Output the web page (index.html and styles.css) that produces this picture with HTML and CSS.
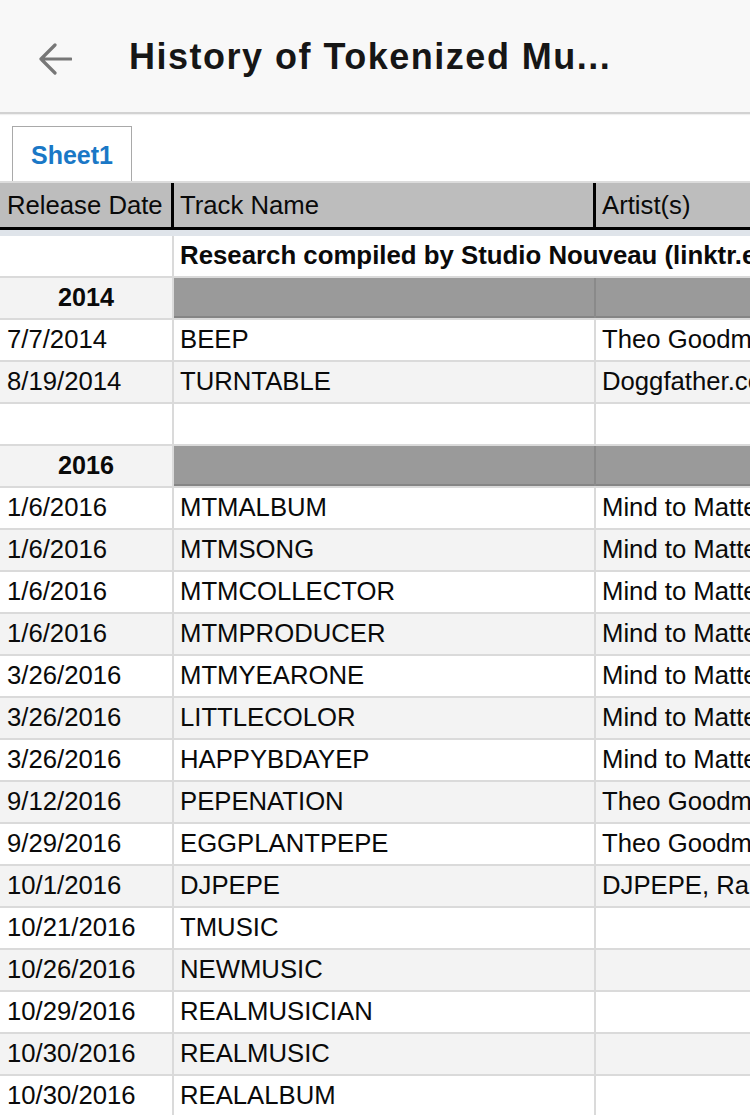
FILE: index.html
```html
<!DOCTYPE html>
<html>
<head>
<meta charset="utf-8">
<link rel="stylesheet" href="styles.css">
</head>
<body>
<div class="appbar">
  <svg class="back" width="40" height="40" viewBox="0 0 40 40"><path d="M39 24H9 M23 10L9 24L23 38" fill="none" stroke="#777" stroke-width="3.2" stroke-linecap="round" stroke-linejoin="round"/></svg>
  <div class="title">History of Tokenized Mu...</div>
</div>
<div class="tabs">
  <div class="tab">Sheet1</div>
</div>
<div class="sheet">
  <div class="hrow">
    <div class="hcell">Release Date</div>
    <div class="hcell">Track Name</div>
    <div class="hcell last">Artist(s)</div>
  </div>
  <div class="band"></div>
  <div class="row">
    <div class="cell"></div>
    <div class="cell bold overflow note">Research compiled by Studio Nouveau (linktr.ee/studionouveau)</div>
    <div class="cell last"></div>
  </div>
  <div class="row alt year">
    <div class="cell center bold">2014</div>
    <div class="cell dark"></div>
    <div class="cell dark last"></div>
  </div>
  <div class="row"><div class="cell">7/7/2014</div><div class="cell">BEEP</div><div class="cell last">Theo Goodman</div></div>
  <div class="row alt"><div class="cell">8/19/2014</div><div class="cell">TURNTABLE</div><div class="cell last">Doggfather.com</div></div>
  <div class="row"><div class="cell"></div><div class="cell"></div><div class="cell last"></div></div>
  <div class="row alt year">
    <div class="cell center bold">2016</div>
    <div class="cell dark"></div>
    <div class="cell dark last"></div>
  </div>
  <div class="row"><div class="cell">1/6/2016</div><div class="cell">MTMALBUM</div><div class="cell last">Mind to Matter</div></div>
  <div class="row alt"><div class="cell">1/6/2016</div><div class="cell">MTMSONG</div><div class="cell last">Mind to Matter</div></div>
  <div class="row"><div class="cell">1/6/2016</div><div class="cell">MTMCOLLECTOR</div><div class="cell last">Mind to Matter</div></div>
  <div class="row alt"><div class="cell">1/6/2016</div><div class="cell">MTMPRODUCER</div><div class="cell last">Mind to Matter</div></div>
  <div class="row"><div class="cell">3/26/2016</div><div class="cell">MTMYEARONE</div><div class="cell last">Mind to Matter</div></div>
  <div class="row alt"><div class="cell">3/26/2016</div><div class="cell">LITTLECOLOR</div><div class="cell last">Mind to Matter</div></div>
  <div class="row"><div class="cell">3/26/2016</div><div class="cell">HAPPYBDAYEP</div><div class="cell last">Mind to Matter</div></div>
  <div class="row alt"><div class="cell">9/12/2016</div><div class="cell">PEPENATION</div><div class="cell last">Theo Goodman</div></div>
  <div class="row"><div class="cell">9/29/2016</div><div class="cell">EGGPLANTPEPE</div><div class="cell last">Theo Goodman</div></div>
  <div class="row alt"><div class="cell">10/1/2016</div><div class="cell">DJPEPE</div><div class="cell last">DJPEPE, Rare Pepe</div></div>
  <div class="row"><div class="cell">10/21/2016</div><div class="cell">TMUSIC</div><div class="cell last"></div></div>
  <div class="row alt"><div class="cell">10/26/2016</div><div class="cell">NEWMUSIC</div><div class="cell last"></div></div>
  <div class="row"><div class="cell">10/29/2016</div><div class="cell">REALMUSICIAN</div><div class="cell last"></div></div>
  <div class="row alt"><div class="cell">10/30/2016</div><div class="cell">REALMUSIC</div><div class="cell last"></div></div>
  <div class="row"><div class="cell">10/30/2016</div><div class="cell">REALALBUM</div><div class="cell last"></div></div>
</div>
</body>
</html>
```

FILE: styles.css
```css
html, body {
  margin: 0;
  padding: 0;
  background: #ffffff;
}
body {
  width: 750px;
  height: 1115px;
  overflow: hidden;
  font-family: "Liberation Sans", Arial, sans-serif;
  color: #0a0a0a;
}
.appbar {
  height: 112px;
  background: #f8f8f8;
  border-bottom: 2px solid #d2d2d2;
  box-shadow: 0 1px 1px rgba(0,0,0,0.06);
  display: flex;
  align-items: center;
  position: relative;
}
.back {
  margin-left: 32px;
  margin-top: -2px;
  flex: none;
}
.title {
  margin-left: 57px;
  margin-top: 2px;
  font-family: "Liberation Sans", Arial, sans-serif;
  font-weight: 700;
  font-size: 36px;
  letter-spacing: 1.5px;
  color: #161616;
  white-space: nowrap;
}
.tabs {
  height: 55px;
  padding-top: 12px;
  border-bottom: 2px solid #dcdcdc;
  display: flex;
}
.tab {
  margin-left: 12px;
  width: 120px;
  height: 55px;
  box-sizing: border-box;
  border: 1.5px solid #a9a9a9;
  border-bottom: none;
  background: #fff;
  color: #1a78c6;
  font-weight: 700;
  font-size: 25px;
  display: flex;
  align-items: center;
  justify-content: center;
  padding-top: 3px;
}
.sheet {
  width: 750px;
  overflow: hidden;
}
.hrow, .row {
  display: grid;
  grid-template-columns: 174px 422px 320px;
  width: 916px;
}
.hrow {
  height: 47px;
  background: #bdbdbd;
  border-bottom: 3px solid #000;
  box-sizing: border-box;
}
.hcell {
  border-right: 3px solid #000;
  font-size: 25.7px;
  line-height: 44px;
  padding-left: 6px;
  white-space: nowrap;
  overflow: hidden;
}
.hcell:first-child {
  padding-left: 7px;
}
.hcell.last {
  border-right: none;
}
.band {
  height: 6px;
  background: #dfe4ea;
}
.row {
  height: 42px;
  box-sizing: border-box;
  border-bottom: 2px solid #dadada;
  background: #fff;
}
.row.alt {
  background: #f3f3f3;
}
.cell {
  border-right: 2px solid #dadada;
  font-size: 25.7px;
  line-height: 39px;
  padding-left: 6px;
  white-space: nowrap;
  overflow: hidden;
}
.cell:first-child {
  padding-left: 7px;
}
.cell.last {
  border-right: none;
}
.cell.bold {
  font-weight: 700;
  font-size: 25.2px;
}
.cell.note {
  font-size: 25.8px;
}
.cell.center {
  text-align: center;
  padding-left: 0;
}
.cell.overflow {
  overflow: visible;
  border-right-color: transparent;
  position: relative;
  z-index: 1;
}
.cell.dark {
  background: #9a9a9a;
  border-right-color: #8a8a8a;
  box-shadow: inset 0 -2px 0 #858585;
}
.cell.dark.last {
  border-right: none;
}
```
